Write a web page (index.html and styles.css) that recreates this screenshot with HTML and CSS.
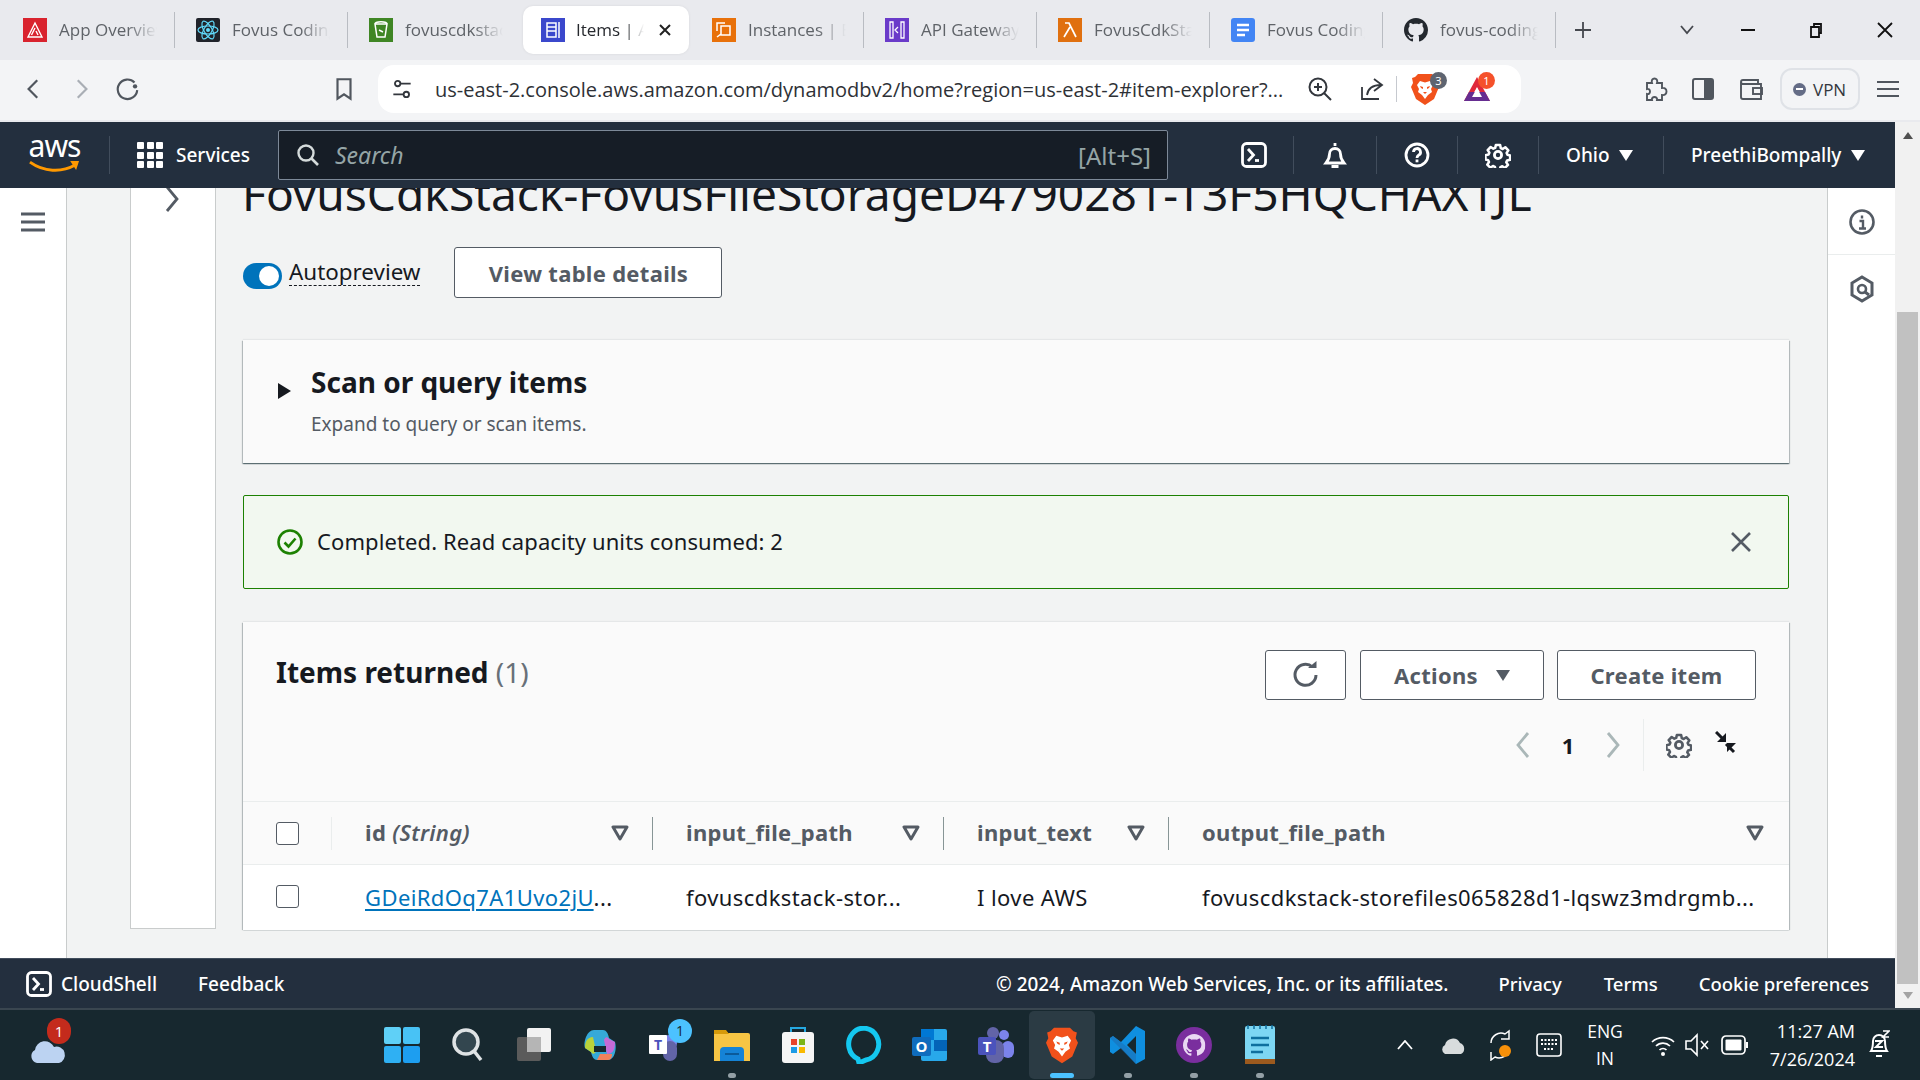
FILE: index.html
```html
<!DOCTYPE html>
<html lang="en">
<head>
    <meta charset="UTF-8">
    <title>Items | Amazon DynamoDB</title>
    <link rel="stylesheet" href="styles.css">
</head>
<body>

<svg class="sprites" width="0" height="0">
    <symbol id="i-terminal" viewBox="0 0 26 26"><rect x="1.500" y="1.500" width="23" height="23" rx="4" fill="none" stroke="currentColor" stroke-width="2.800"/><path d="M7 7l5.500 6L7 19" fill="none" stroke="currentColor" stroke-width="2.800"/><path d="M14 18.500h4" stroke="currentColor" stroke-width="2.800"/></symbol>
    <symbol id="i-gear" viewBox="0 0 26 26"><path d="M10.600 2h4.800l.7 3.400 2.100.9 2.900-1.900 3.400 3.400-1.900 2.900.9 2.100 3 .7v4.800l-3.400.7-.9 2.100 1.900 2.900-3.400 3.400-2.900-1.900-2.100.9-.7 3.100h-4.800l-.7-3.400-2.100-.9-2.900 1.900-3.400-3.400 1.900-2.900-.9-2.100-3-.7v-4.800l3.400-.7.9-2.100-1.900-2.900 3.400-3.400 2.900 1.900 2.100-.9z" transform="translate(1.300 1.300) scale(.9)" fill="none" stroke="currentColor" stroke-width="2.800" stroke-linejoin="round"/><circle cx="13" cy="13" r="3.600" fill="none" stroke="currentColor" stroke-width="2.800"/></symbol>
    <symbol id="i-chev-left" viewBox="0 0 16 28"><path d="M13 2L3 14l10 12" fill="none" stroke="currentColor" stroke-width="2.800"/></symbol>
    <symbol id="i-chev-right" viewBox="0 0 16 28"><path d="M3 2l10 12L3 26" fill="none" stroke="currentColor" stroke-width="2.800"/></symbol>
    <symbol id="i-filter" viewBox="0 0 18 16"><path d="M2 2h14L9 14z" fill="none" stroke="currentColor" stroke-width="3" stroke-linejoin="round"/></symbol>
    <symbol id="i-github" viewBox="0 0 16 16"><path fill="currentColor" d="M8 0C3.580 0 0 3.580 0 8c0 3.540 2.290 6.530 5.470 7.590.4.070.55-.17.55-.38 0-.19-.01-.82-.01-1.490-2.010.37-2.530-.49-2.690-.94-.09-.23-.48-.94-.82-1.130-.28-.15-.68-.52-.01-.53.63-.01 1.080.58 1.230.82.72 1.210 1.870.87 2.330.66.070-.52.28-.87.51-1.070-1.780-.2-3.640-.89-3.640-3.950 0-.87.31-1.590.82-2.150-.08-.2-.36-1.020.08-2.120 0 0 .67-.21 2.200.82.64-.18 1.320-.27 2-.27.68 0 1.360.09 2 .27 1.530-1.040 2.200-.82 2.200-.82.44 1.100.16 1.920.08 2.120.51.56.82 1.270.82 2.150 0 3.070-1.870 3.750-3.650 3.950.29.25.54.73.54 1.480 0 1.070-.01 1.930-.01 2.200 0 .21.15.46.55.38A8.013 8.013 0 0016 8c0-4.420-3.580-8-8-8z"/></symbol>
    <symbol id="i-brave" viewBox="0 0 28 32"><path fill="#f1511b" d="M7 1h14l3 3 3 1-1 5 2 4-5 12-9 6-9-6L0 14l2-4-1-5 3-1z"/><path fill="#fff" d="M9 8l5 1.500L19 8l3 4-2 4 1 3-4 3-3 4-3-4-4-3 1-3-2-4z"/><path fill="#f1511b" d="M9 13l3 1v2l-2-1zM19 13l-3 1v2l2-1zM12 19h4l-2 2z"/></symbol>
</svg>

<!-- Browser tabs -->
<div class="tabstrip">
    <div class="tab">
        <svg class="favicon" viewBox="0 0 24 24"><rect width="24" height="24" fill="#d9232e"/><path d="M12 5l7 14H5zM12 10l-3.500 7M13 13l2 4" fill="none" stroke="#fff" stroke-width="1.400"/></svg>
        <span class="tab-title">App Overview</span>
    </div>
    <div class="tab">
        <svg class="favicon" viewBox="0 0 24 24"><rect width="24" height="24" rx="2" fill="#20232a"/><g fill="none" stroke="#61dafb" stroke-width="1.200"><ellipse cx="12" cy="12" rx="10" ry="4"/><ellipse cx="12" cy="12" rx="10" ry="4" transform="rotate(60 12 12)"/><ellipse cx="12" cy="12" rx="10" ry="4" transform="rotate(120 12 12)"/></g><circle cx="12" cy="12" r="2" fill="#61dafb"/></svg>
        <span class="tab-title">Fovus Coding</span>
    </div>
    <div class="tab no-sep">
        <svg class="favicon" viewBox="0 0 24 24"><rect width="24" height="24" fill="#3f8624"/><path d="M6 6h12l-2 13H8zM6 6c0-3 12-3 12 0M10 12l4 2" fill="none" stroke="#fff" stroke-width="1.500"/></svg>
        <span class="tab-title">fovuscdkstack</span>
    </div>
    <div class="tab active">
        <svg class="favicon" viewBox="0 0 24 24"><rect width="24" height="24" fill="#3b48cc"/><path d="M6 5h9v14H6zM6 9h9M6 13h9M18 4v16" fill="none" stroke="#fff" stroke-width="1.500"/></svg>
        <span class="tab-title">Items | Am</span>
        <svg class="tab-close" viewBox="0 0 12 12"><path d="M1 1l10 10M11 1L1 11" stroke="#222" stroke-width="2"/></svg>
    </div>
    <div class="tab">
        <svg class="favicon" viewBox="0 0 24 24"><rect width="24" height="24" fill="#e8710a"/><path d="M9 8h9v9H9zM5 13V5h8M5 19l4-3" fill="none" stroke="#fff" stroke-width="1.500"/></svg>
        <span class="tab-title">Instances | EC2</span>
    </div>
    <div class="tab">
        <svg class="favicon" viewBox="0 0 24 24"><rect width="24" height="24" fill="#6a3bc9"/><path d="M5 4h3v16H5zM16 4h3v16h-3zM13 9l-3 3 3 3" fill="none" stroke="#fff" stroke-width="1.300"/></svg>
        <span class="tab-title">API Gateway</span>
    </div>
    <div class="tab">
        <svg class="favicon" viewBox="0 0 24 24"><rect width="24" height="24" fill="#e0700f"/><path d="M7 5h4l7 14M12 9l-6 10" fill="none" stroke="#fff" stroke-width="1.700"/></svg>
        <span class="tab-title">FovusCdkStack</span>
    </div>
    <div class="tab">
        <svg class="favicon" viewBox="0 0 24 24"><rect width="24" height="24" rx="3" fill="#4285f4"/><path d="M6 7h12M6 12h12M6 17h8" stroke="#fff" stroke-width="2.400"/></svg>
        <span class="tab-title">Fovus Coding</span>
    </div>
    <div class="tab">
        <svg class="favicon favicon-dark"><use href="#i-github"/></svg>
        <span class="tab-title">fovus-coding</span>
    </div>
    <svg class="strip-plus" viewBox="0 0 18 18"><path d="M9 1v16M1 9h16" stroke="#45484e" stroke-width="1.800"/></svg>
    <div class="window-controls">
        <svg class="win-btn btn-list" viewBox="0 0 16 10"><path d="M2 1l6 7 6-7" fill="none" stroke="#45484e" stroke-width="1.800"/></svg>
        <svg class="win-btn btn-min" viewBox="0 0 14 2"><path d="M0 1h14" stroke="#111" stroke-width="2"/></svg>
        <svg class="win-btn btn-max" viewBox="0 0 16 16"><path d="M3 5h8v10H3zM6 5V2h7v9h-2" fill="none" stroke="#111" stroke-width="1.800"/></svg>
        <svg class="win-btn btn-close" viewBox="0 0 16 16"><path d="M1 1l14 14M15 1L1 15" stroke="#111" stroke-width="1.800"/></svg>
    </div>
</div>

<!-- Browser toolbar -->
<div class="toolbar">
    <div class="nav-buttons">
        <svg class="tool-icon" viewBox="0 0 24 24"><path d="M15 4l-8 8 8 8" fill="none" stroke="#50565e" stroke-width="2"/></svg>
        <svg class="tool-icon" viewBox="0 0 24 24"><path d="M9 4l8 8-8 8" fill="none" stroke="#a9aeb5" stroke-width="2"/></svg>
        <svg class="tool-icon" viewBox="0 0 24 24"><path d="M18 6a9 9 0 1 0 2.500 7" fill="none" stroke="#50565e" stroke-width="2"/><circle cx="18.500" cy="9.500" r="2" fill="#50565e"/></svg>
    </div>
    <svg class="tool-icon bookmark" viewBox="0 0 24 24"><path d="M6 3h12v18l-6-4-6 4z" fill="none" stroke="#50565e" stroke-width="2"/></svg>
    <div class="urlbar">
        <svg class="tool-icon tune" viewBox="0 0 24 24"><circle cx="8" cy="7" r="2.500" fill="none" stroke="#33373d" stroke-width="1.700"/><circle cx="16" cy="17" r="2.500" fill="none" stroke="#33373d" stroke-width="1.700"/><path d="M11 7h9M4 17h9" stroke="#33373d" stroke-width="1.700"/></svg>
        <span class="url-text">us-east-2.console.aws.amazon.com/dynamodbv2/home?region=us-east-2#item-explorer?...</span>
        <svg class="tool-icon url-zoom" viewBox="0 0 26 26"><circle cx="11" cy="11" r="8.500" fill="none" stroke="#33373d" stroke-width="2"/><path d="M17 17l7 7M7 11h8M11 7v8" stroke="#33373d" stroke-width="2"/></svg>
        <svg class="tool-icon url-share" viewBox="0 0 26 26"><path d="M15 3l8 6-8 6M22 9c-8 0-13 3-14 10M3 11v12h17" fill="none" stroke="#33373d" stroke-width="1.800"/></svg>
        <span class="url-sep"></span>
        <span class="ext-wrap ext-brave">
            <svg class="ext-icon"><use href="#i-brave"/></svg>
            <span class="ext-count gray">3</span>
        </span>
        <span class="ext-wrap ext-bat">
            <svg class="ext-icon" viewBox="0 0 28 28"><path d="M14 2l13 24H1z" fill="#e0293b"/><path d="M14 12l6 11H8z" fill="#fff"/><path d="M1 26l5-9h16l5 9z" fill="#662d91"/><path d="M14 13l5 9H9z" fill="#fff"/></svg>
            <span class="ext-count orange">1</span>
        </span>
    </div>
    <svg class="tool-icon t-puzzle" viewBox="0 0 26 26"><path d="M5 7h5c-2-6 7-6 5 0h5v5c6-1 6 8 0 7v5h-5c1-4-6-4-5 0H5v-6c4 1 4-6 0-5z" fill="none" stroke="#50565e" stroke-width="1.900"/></svg>
    <svg class="tool-icon" viewBox="0 0 26 26"><rect x="3" y="3" width="20" height="20" rx="2" fill="none" stroke="#50565e" stroke-width="2"/><rect x="14" y="3" width="9" height="20" fill="#50565e"/></svg>
    <svg class="tool-icon" viewBox="0 0 26 26"><path d="M3 6a2 2 0 0 1 2-2h15v4M3 6v15a2 2 0 0 0 2 2h18V8H5a2 2 0 0 1-2-2z" fill="none" stroke="#50565e" stroke-width="1.900"/><rect x="15" y="12" width="9" height="6" fill="none" stroke="#50565e" stroke-width="1.900"/></svg>
    <div class="vpn-pill"><span class="vpn-dot"></span>VPN</div>
    <svg class="tool-icon t-menu" viewBox="0 0 26 26"><path d="M2 6h22M2 13h22M2 20h22" stroke="#50565e" stroke-width="2"/></svg>
</div>

<div class="viewport">
    <div class="console">

        <!-- AWS top navigation -->
        <header class="topnav">
            <div class="aws-logo">
                <span class="aws-word">aws</span>
                <svg class="aws-smile" viewBox="0 0 54 16"><path d="M2 3c14 10 32 11 46 3" fill="none" stroke="#f90" stroke-width="3"/><path d="M43 2l9 0-3 9z" fill="#f90"/></svg>
            </div>
            <span class="nav-sep sep-logo"></span>
            <div class="services">
                <div class="grid-icon"><i></i><i></i><i></i><i></i><i></i><i></i><i></i><i></i><i></i></div>
                <span>Services</span>
            </div>
            <div class="searchbox">
                <svg class="search-icon" viewBox="0 0 24 24"><circle cx="10" cy="10" r="7.500" fill="none" stroke="#d5dbdb" stroke-width="2.400"/><path d="M15.500 15.500L22 22" stroke="#d5dbdb" stroke-width="2.600"/></svg>
                <span class="search-text">Search</span>
                <span class="search-hint">[Alt+S]</span>
            </div>
            <div class="nav-cell cell-first"><svg class="nav-icon"><use href="#i-terminal"/></svg></div>
            <span class="nav-sep"></span>
            <div class="nav-cell cell-bell">
                <svg class="nav-icon" viewBox="0 0 26 26"><path d="M13 1v3M4 21c2.500-3 3.500-5 3.500-9a5.500 5.500 0 0 1 11 0c0 4 1 6 3.500 9zM9.500 24.500h7" fill="none" stroke="currentColor" stroke-width="2.800"/></svg>
            </div>
            <span class="nav-sep"></span>
            <div class="nav-cell">
                <svg class="nav-icon" viewBox="0 0 26 26"><circle cx="13" cy="13" r="11" fill="none" stroke="currentColor" stroke-width="2.800"/><path d="M9.500 10a3.500 3.500 0 1 1 5 3.200c-1 .6-1.500 1.300-1.500 2.800" fill="none" stroke="currentColor" stroke-width="2.800"/><rect x="11.600" y="17.500" width="2.800" height="2.800" fill="currentColor"/></svg>
            </div>
            <span class="nav-sep"></span>
            <div class="nav-cell"><svg class="nav-icon"><use href="#i-gear"/></svg></div>
            <span class="nav-sep"></span>
            <div class="nav-menu menu-region">Ohio<span class="caret"></span></div>
            <span class="nav-sep"></span>
            <div class="nav-menu menu-user">PreethiBompally<span class="caret"></span></div>
        </header>

        <div class="main">
            <aside class="rail nav-rail">
                <svg class="rail-burger" viewBox="0 0 24 20"><path d="M0 2h24M0 10h24M0 18h24" stroke="#545b64" stroke-width="3"/></svg>
            </aside>
            <div class="gutter"></div>
            <aside class="rail split-rail">
                <svg class="split-chevron"><use href="#i-chev-right"/></svg>
            </aside>

            <main class="content">
                <h1 class="table-title">FovusCdkStack-FovusFileStorageD4790281-T3F5HQCHAX1JL</h1>

                <div class="title-actions">
                    <span class="toggle"><span class="toggle-knob"></span></span>
                    <span class="toggle-label">Autopreview</span>
                    <button class="btn btn-details">View table details</button>
                </div>

                <section class="card scan-card">
                    <span class="expand-caret"></span>
                    <div>
                        <h2 class="card-title">Scan or query items</h2>
                        <p class="card-desc">Expand to query or scan items.</p>
                    </div>
                </section>

                <div class="alert">
                    <svg class="alert-icon" viewBox="0 0 26 26"><circle cx="13" cy="13" r="11.500" fill="none" stroke="#1d8102" stroke-width="2.600"/><path d="M7.500 13.500l4 4 7-8" fill="none" stroke="#1d8102" stroke-width="2.600"/></svg>
                    <span class="alert-text">Completed. Read capacity units consumed: 2</span>
                    <svg class="alert-close" viewBox="0 0 22 22"><path d="M2 2l18 18M20 2L2 20" stroke="#545b64" stroke-width="2.600"/></svg>
                </div>

                <section class="card items-card">
                    <div class="items-head">
                        <h2 class="card-title items-title">Items returned <span class="count">(1)</span></h2>
                        <div class="items-actions">
                            <button class="btn btn-refresh">
                                <svg viewBox="0 0 28 28" width="28" height="28"><path d="M24 14a10.500 10.500 0 1 1-3.500-8" fill="none" stroke="#545b64" stroke-width="3"/><path d="M16 7h8.500V0z" fill="#545b64"/></svg>
                            </button>
                            <button class="btn btn-actions">Actions<span class="caret caret-dark"></span></button>
                            <button class="btn btn-create">Create item</button>
                        </div>
                    </div>

                    <div class="pager">
                        <svg class="pager-chev"><use href="#i-chev-left"/></svg>
                        <span class="pager-num">1</span>
                        <svg class="pager-chev"><use href="#i-chev-right"/></svg>
                        <span class="pager-sep"></span>
                        <svg class="pager-gear"><use href="#i-gear"/></svg>
                        <svg class="pager-wrap" viewBox="0 0 24 24"><path d="M1 1l8 8M19 21l-8-8" stroke="#16191f" stroke-width="3"/><path d="M2 11h9V2zM12 12h9l-9 9z" fill="#16191f"/></svg>
                    </div>

                    <table class="items-table">
                        <thead>
                            <tr>
                                <th class="col-check"><div class="th-check"><span class="checkbox"></span></div></th>
                                <th class="col-id"><div class="th-inner"><span><b>id</b> <em>(String)</em></span><svg class="filter"><use href="#i-filter"/></svg></div></th>
                                <th class="col-file"><div class="th-inner"><span>input_file_path</span><svg class="filter"><use href="#i-filter"/></svg></div></th>
                                <th class="col-text"><div class="th-inner"><span>input_text</span><svg class="filter"><use href="#i-filter"/></svg></div></th>
                                <th class="col-out"><div class="th-inner"><span>output_file_path</span><svg class="filter"><use href="#i-filter"/></svg></div></th>
                            </tr>
                        </thead>
                        <tbody>
                            <tr>
                                <td class="col-check"><span class="checkbox"></span></td>
                                <td class="col-id"><a class="item-link" href="#">GDeiRdOq7A1Uvo2jU</a>...</td>
                                <td class="col-file">fovuscdkstack-stor...</td>
                                <td class="col-text">I love AWS</td>
                                <td class="col-out">fovuscdkstack-storefiles065828d1-lqswz3mdrgmb...</td>
                            </tr>
                        </tbody>
                    </table>
                </section>
            </main>

            <aside class="rail tools-rail">
                <div class="tool-slot">
                    <svg viewBox="0 0 26 26" width="26" height="26"><circle cx="13" cy="13" r="11.500" fill="none" stroke="#545b64" stroke-width="2.600"/><path d="M13 6.500v3M10.500 12H14v7M10 19.500h7" fill="none" stroke="#545b64" stroke-width="2.400"/></svg>
                </div>
                <div class="tool-slot">
                    <svg viewBox="0 0 26 28" width="26" height="28"><path d="M13 2l10 6v12l-10 6-10-6V8z" fill="none" stroke="#545b64" stroke-width="3"/><circle cx="13" cy="14" r="4" fill="none" stroke="#545b64" stroke-width="2.600"/><path d="M16 17l4 3" stroke="#545b64" stroke-width="3"/></svg>
                </div>
            </aside>
        </div>

        <footer class="console-footer">
            <svg class="foot-icon"><use href="#i-terminal"/></svg>
            <span class="foot-shell">CloudShell</span>
            <span class="foot-feedback">Feedback</span>
            <span class="foot-copy">&copy; 2024, Amazon Web Services, Inc. or its affiliates.</span>
            <span class="foot-privacy">Privacy</span>
            <span class="foot-terms">Terms</span>
            <span class="foot-cookie">Cookie preferences</span>
        </footer>
    </div>

    <div class="scrollbar">
        <span class="arrow arrow-up"></span>
        <div class="scroll-track"><div class="scroll-thumb"></div></div>
        <span class="arrow arrow-down"></span>
    </div>
</div>

<!-- Windows taskbar -->
<div class="taskbar">
    <div class="task-weather">
        <svg viewBox="0 0 38 34" width="38" height="34"><path d="M8 32a7 7 0 0 1-2-13 10 10 0 0 1 19-3 8 8 0 0 1 5 16z" fill="#bcd3f2"/></svg>
        <span class="weather-badge">1</span>
    </div>
    <div class="task-apps">
        <div class="task-app">
            <svg viewBox="0 0 36 36" width="36" height="36"><rect width="17" height="17" rx="2" fill="#5fd0f7"/><rect x="19" width="17" height="17" rx="2" fill="#48c2f5"/><rect y="19" width="17" height="17" rx="2" fill="#2fb0f3"/><rect x="19" y="19" width="17" height="17" rx="2" fill="#1d9ef0"/></svg>
        </div>
        <div class="task-app">
            <svg viewBox="0 0 34 36" width="34" height="36"><circle cx="15" cy="15" r="12" fill="#33464f" stroke="#dfe3e5" stroke-width="3.500"/><path d="M23 24l7 9" stroke="#dfe3e5" stroke-width="3.500"/></svg>
        </div>
        <div class="task-app">
            <svg viewBox="0 0 36 36" width="36" height="36"><rect x="1" y="10" width="24" height="24" rx="2" fill="#5b5b5b"/><rect x="11" y="1" width="24" height="24" rx="2" fill="#f2f2f2"/><rect x="11" y="10" width="14" height="15" fill="#b5b5b5"/></svg>
        </div>
        <div class="task-app">
            <svg viewBox="0 0 36 36" width="36" height="36"><path d="M12 3h9c3 0 5 3 6 8l6 4c2 6 0 18-7 18H15c-3 0-5-3-6-8l-6-4C1 15 5 3 12 3z" fill="#36a9d8"/><path d="M3 21c0-6 2-11 8-11l3 14c-1 3-3 4-5 1z" fill="#b9d23a"/><path d="M33 15c0 8-2 12-8 12l-3-14c1-3 3-4 5-1z" fill="#c66ad6"/><path d="M15 33l11 0c3 0 4-3 4-6H18z" fill="#f2815c"/><path d="M12 19h12v6H12z" fill="#17282f"/></svg>
        </div>
        <div class="task-app">
            <svg viewBox="0 0 38 36" width="38" height="36"><circle cx="22" cy="16" r="8" fill="#7b83eb"/><rect x="16" y="14" width="14" height="20" rx="7" fill="#6264a7"/><rect x="2" y="8" width="18" height="19" rx="1" fill="#fff"/><text class="svg-t" x="11" y="23" text-anchor="middle">T</text></svg>
            <span class="app-badge">1</span>
        </div>
        <div class="task-app running">
            <svg viewBox="0 0 36 36" width="36" height="36"><path d="M0 5a2 2 0 0 1 2-2h9l3 3h20a2 2 0 0 1 2 2v26H0z" fill="#f7c544"/><path d="M0 3h12l3 4H0z" fill="#d69a0a"/><path d="M6 24a4 4 0 0 1 4-4h16a4 4 0 0 1 4 4v10H6z" fill="#1583d6"/><rect x="11" y="26" width="14" height="2" fill="#0b5a99"/></svg>
        </div>
        <div class="task-app">
            <svg viewBox="0 0 34 38" width="34" height="38"><path d="M10 7V2h14v5" fill="none" stroke="#25a8e0" stroke-width="2"/><rect x="1" y="6" width="32" height="31" rx="3" fill="#f5f5f5"/><rect x="10" y="13" width="6" height="6" fill="#e8442a"/><rect x="18" y="13" width="6" height="6" fill="#7cb518"/><rect x="10" y="21" width="6" height="6" fill="#1c9be6"/><rect x="18" y="21" width="6" height="6" fill="#f9b900"/></svg>
        </div>
        <div class="task-app">
            <svg viewBox="0 0 36 38" width="36" height="38"><path d="M12 33a15 16 0 1 1 8 1l-7 3z" fill="none" stroke="#14c8f0" stroke-width="5"/></svg>
        </div>
        <div class="task-app">
            <svg viewBox="0 0 38 36" width="38" height="36"><rect x="10" y="2" width="26" height="32" rx="2" fill="#28a8ea"/><rect x="10" y="2" width="13" height="11" fill="#0078d4"/><rect x="23" y="13" width="13" height="11" fill="#0364b8"/><rect x="1" y="10" width="19" height="19" rx="2" fill="#0f6cbd"/><text class="svg-o" x="10.500" y="25" text-anchor="middle">O</text></svg>
        </div>
        <div class="task-app">
            <svg viewBox="0 0 38 38" width="38" height="38"><circle cx="27" cy="9" r="5" fill="#7b83eb"/><circle cx="16" cy="7" r="6" fill="#6264a7"/><rect x="25" y="15" width="12" height="17" rx="6" fill="#7b83eb"/><rect x="9" y="14" width="18" height="23" rx="8" fill="#6264a7"/><rect x="1" y="11" width="18" height="18" rx="2" fill="#4b53bc"/><text class="svg-t2" x="10" y="26" text-anchor="middle">T</text></svg>
        </div>
        <div class="task-app active">
            <svg width="32" height="40"><use href="#i-brave"/></svg>
        </div>
        <div class="task-app running">
            <svg viewBox="0 0 36 40" width="36" height="40"><path d="M26 1l9 5v28l-9 5-15-16L3 29l-3-2V13l3-2 8 6zM26 11l-9 9 9 9z" fill="#0f8fe0"/><path d="M3 11l23 18v10L0 13z" fill="#1a6fb5" opacity=".6"/></svg>
        </div>
        <div class="task-app running">
            <svg viewBox="0 0 36 36" width="36" height="36"><circle cx="18" cy="18" r="18" fill="#7a2e9e"/><g transform="translate(7 7) scale(1.400)" color="#e9d8f2"><use href="#i-github" width="16" height="16"/></g></svg>
        </div>
        <div class="task-app running">
            <svg viewBox="0 0 30 40" width="30" height="40"><rect y="1" width="30" height="38" rx="2" fill="#7dd6f3"/><rect y="34" width="30" height="5" fill="#9c5a1e"/><path d="M6 13h18M6 20h18M6 27h12" stroke="#0f6f9e" stroke-width="2.500"/><path d="M3 0v4M9 0v4M15 0v4M21 0v4M27 0v4" stroke="#0f6f9e" stroke-width="1.500"/></svg>
        </div>
    </div>
    <div class="tray">
        <svg class="tray-chevron" viewBox="0 0 16 10"><path d="M1 9l7-8 7 8" fill="none" stroke="#fff" stroke-width="1.800"/></svg>
        <svg class="tray-cloud" viewBox="0 0 26 20"><path d="M5 19a5 5 0 0 1 0-9 8 8 0 0 1 15-2 6 6 0 0 1 1 11z" fill="#d8dcdd"/></svg>
        <svg class="tray-sync" viewBox="0 0 26 32"><path d="M3 14a10 10 0 0 1 14-9l4-3v8h-8M21 19a10 10 0 0 1-14 9l-4 3v-8" fill="none" stroke="#fff" stroke-width="1.500"/><circle cx="17" cy="22" r="6" fill="#f79009"/></svg>
        <svg class="tray-keys" viewBox="0 0 26 24"><rect x="1" y="1" width="24" height="22" rx="3" fill="none" stroke="#fff" stroke-width="1.600"/><path d="M5 7h16M5 11h16M8 16h10" stroke="#fff" stroke-width="2" stroke-dasharray="2 1.500"/></svg>
        <div class="tray-lang">ENG<br>IN</div>
        <svg class="tray-wifi" viewBox="0 0 26 24"><path d="M2 9a16 16 0 0 1 22 0M6 13a10 10 0 0 1 14 0M9.500 17a5 5 0 0 1 7 0" fill="none" stroke="#fff" stroke-width="1.700"/><circle cx="13" cy="21" r="2" fill="#fff"/></svg>
        <svg class="tray-vol" viewBox="0 0 26 24"><path d="M2 8h5l6-6v20l-6-6H2z" fill="none" stroke="#fff" stroke-width="1.600"/><path d="M17 8l7 8M24 8l-7 8" stroke="#fff" stroke-width="1.600"/></svg>
        <svg class="tray-batt" viewBox="0 0 28 24"><rect x="1" y="3" width="23" height="18" rx="4" fill="none" stroke="#fff" stroke-width="1.700"/><rect x="4.500" y="6.500" width="16" height="11" rx="1" fill="#fff"/><path d="M26 9v6" stroke="#fff" stroke-width="2"/></svg>
        <div class="tray-clock">11:27 AM<br>7/26/2024</div>
        <svg class="tray-bell" viewBox="0 0 22 32"><path d="M3 22c2-3 2-6 2-10a6 6 0 0 1 12 0c0 4 0 7 2 10zM8 27h6" fill="none" stroke="#fff" stroke-width="2"/><path d="M7 12h7l-6 6h7" fill="none" stroke="#fff" stroke-width="2"/><path d="M15 2h6l-6 6h6" fill="none" stroke="#fff" stroke-width="1.600"/></svg>
    </div>
</div>

</body>
</html>
```

FILE: styles.css
```css
* {
    box-sizing: border-box;
}

html, body {
    margin: 0;
    height: 1080px;
    overflow: hidden;
}

body {
    font-family: "Noto Sans", "Open Sans", sans-serif;
    color: #16191f;
    background-color: #f2f3f3;
    display: flex;
    flex-direction: column;
}

.sprites {
    position: absolute;
}

/* Browser tabs */
.tabstrip {
    height: 60px;
    flex: none;
    display: flex;
    align-items: center;
    padding-left: 2px;
    background-color: #e9eaee;
    font-family: "Open Sans", sans-serif;
}

.tab {
    width: 173px;
    height: 36px;
    flex: none;
    display: flex;
    align-items: center;
    padding-left: 21px;
    border-right: 1px solid #b9bcc2;
    font-size: 17px;
    color: #5f6368;
}

.tab.no-sep {
    border-right: none;
    width: 175px;
}

.tab.active {
    height: 48px;
    width: 166px;
    margin-right: 2px;
    padding-left: 18px;
    border-right: none;
    border-radius: 10px;
    background-color: #fff;
    color: #26292e;
    box-shadow: 0 0 3px rgba(0, 0, 0, 0.08);
}

.favicon {
    width: 24px;
    height: 24px;
    flex: none;
}

.favicon-dark {
    color: #24292f;
}

.tab-title {
    width: 98px;
    margin-left: 12px;
    padding-bottom: 2px;
    white-space: nowrap;
    overflow: hidden;
    -webkit-mask-image: linear-gradient(to right, #000 70%, transparent 100%);
    mask-image: linear-gradient(to right, #000 70%, transparent 100%);
}

.tab.active .tab-title {
    width: 68px;
    margin-left: 11px;
}

.tab-close {
    width: 12px;
    height: 12px;
    flex: none;
    margin-left: 15px;
}

.strip-plus {
    width: 18px;
    height: 18px;
    margin-left: 18px;
}

.window-controls {
    display: flex;
    align-items: center;
    margin-left: 87px;
}

.win-btn {
    flex: none;
}

.btn-list {
    width: 16px;
    height: 10px;
}

.btn-min {
    width: 14px;
    height: 2px;
    margin-left: 46px;
}

.btn-max {
    width: 16px;
    height: 16px;
    margin-left: 53px;
}

.btn-close {
    width: 16px;
    height: 16px;
    margin-left: 53px;
}

/* Browser toolbar */
.toolbar {
    height: 62px;
    flex: none;
    display: flex;
    align-items: center;
    padding: 0 0 2px 10px;
    background-color: #f3f4f6;
    border-bottom: 2px solid #e9eaee;
}

.tool-icon {
    width: 26px;
    height: 26px;
    flex: none;
    margin: 0 11px;
}

.nav-buttons {
    display: flex;
    width: 142px;
}

.nav-buttons .tool-icon {
    margin: 0 10.500px;
}

.bookmark {
    margin-left: 179px;
    margin-right: 21px;
}

.urlbar {
    width: 1143px;
    height: 48px;
    flex: none;
    display: flex;
    align-items: center;
    padding-left: 11px;
    background-color: #fff;
    border-radius: 16px;
}

.tool-icon.tune {
    margin: 0;
}

.url-text {
    width: 858px;
    flex: none;
    margin-left: 20px;
    font-family: "Open Sans", sans-serif;
    font-size: 20px;
    white-space: nowrap;
    color: #2e3136;
}

.tool-icon.url-zoom {
    margin: 0 0 0 14px;
}

.tool-icon.url-share {
    margin: 0 0 0 26px;
}

.url-sep {
    width: 1px;
    height: 26px;
    margin-left: 11px;
    background-color: #c6c9cf;
}

.ext-wrap {
    position: relative;
    display: block;
    width: 28px;
    height: 32px;
    flex: none;
}

.ext-brave {
    margin-left: 14px;
}

.ext-bat {
    margin-left: 24px;
}

.ext-icon {
    width: 28px;
    height: 32px;
    display: block;
}

.ext-count {
    position: absolute;
    top: -1px;
    right: -8px;
    width: 17px;
    height: 17px;
    border-radius: 50%;
    color: #fff;
    font-size: 11px;
    line-height: 17px;
    text-align: center;
}

.ext-count.gray {
    background-color: #5e6470;
}

.ext-count.orange {
    right: -4px;
    background-color: #f5512b;
}

.tool-icon.t-puzzle {
    margin-left: 121px;
}

.vpn-pill {
    width: 80px;
    height: 42px;
    flex: none;
    margin-left: 5px;
    display: flex;
    align-items: center;
    gap: 7px;
    padding-left: 11px;
    border: 2px solid #dfe2e7;
    border-radius: 12px;
    font-family: "Open Sans", sans-serif;
    font-size: 17px;
    color: #33373d;
}

.vpn-dot {
    width: 13px;
    height: 13px;
    border-radius: 50%;
    background: linear-gradient(#fff, #fff) center / 7px 2px no-repeat, #646c86;
}

.tool-icon.t-menu {
    margin-left: 15px;
    margin-right: 0;
}

/* Console frame */
.viewport {
    flex: 1;
    display: flex;
    min-height: 0;
}

.console {
    width: 1895px;
    flex: none;
    display: flex;
    flex-direction: column;
}

.topnav {
    height: 66px;
    flex: none;
    display: flex;
    align-items: center;
    background-color: #232f3e;
    color: #fff;
    font-size: 19px;
}

.aws-logo {
    width: 53px;
    margin-left: 28px;
    display: flex;
    flex-direction: column;
    align-items: center;
    flex: none;
}

.aws-word {
    font-size: 30px;
    line-height: 22px;
    letter-spacing: -1px;
    font-weight: 400;
}

.aws-smile {
    width: 53px;
    height: 16px;
    margin-top: 2px;
}

.nav-sep {
    width: 1px;
    height: 38px;
    flex: none;
    background-color: #414d5c;
}

.sep-logo {
    margin-left: 28px;
}

.services {
    width: 141px;
    display: flex;
    align-items: center;
    flex: none;
    margin-left: 27px;
}

.services span {
    margin-left: 13px;
    font-weight: 500;
}

.grid-icon {
    width: 26px;
    display: grid;
    grid-template-columns: repeat(3, 7px);
    gap: 2.500px;
}

.grid-icon i {
    height: 7px;
    background-color: #fff;
    border-radius: 1px;
}

.searchbox {
    width: 890px;
    height: 50px;
    flex: none;
    display: flex;
    align-items: center;
    padding: 0 16px 0 17px;
    background-color: #161d26;
    border: 1px solid #7d8998;
    border-radius: 2px;
}

.search-icon {
    width: 24px;
    height: 24px;
}

.search-text {
    margin-left: 15px;
    font-size: 23px;
    font-style: italic;
    color: #95a5a6;
}

.search-hint {
    margin-left: auto;
    font-size: 24px;
    color: #95a5a6;
}

.nav-cell {
    width: 80px;
    flex: none;
    display: flex;
    justify-content: center;
    color: #fff;
}

.nav-cell.cell-first {
    width: 125px;
    padding-left: 46px;
}

.nav-cell.cell-bell {
    width: 82px;
}

.nav-icon {
    width: 26px;
    height: 26px;
}

.nav-menu {
    display: flex;
    align-items: center;
    flex: none;
    font-weight: 500;
    white-space: nowrap;
}

.menu-region {
    width: 124px;
    padding-left: 27px;
}

.menu-region .caret {
    margin-left: 9px;
}

.menu-user {
    padding-left: 27px;
}

.caret {
    width: 0;
    height: 0;
    margin-left: 10px;
    border-left: 7px solid transparent;
    border-right: 7px solid transparent;
    border-top: 11px solid #fff;
}

/* Main layout */
.main {
    flex: 1;
    display: flex;
    min-height: 0;
    overflow: hidden;
}

.rail {
    flex: none;
    background-color: #fff;
    box-shadow: 0 0 0 1px #c9cccc;
}

.nav-rail {
    width: 66px;
    padding: 24px 0 0 21px;
}

.rail-burger {
    width: 24px;
    height: 20px;
    display: block;
}

.gutter {
    width: 65px;
    flex: none;
}

.split-rail {
    width: 84px;
    height: 740px;
    padding: 0 0 0 33px;
    margin-bottom: 30px;
}

.split-chevron {
    width: 16px;
    height: 28px;
    display: block;
    color: #545b64;
    margin-top: -3px;
}

.content {
    flex: 1;
    min-width: 0;
    padding: 0 39px 0 28px;
}

.table-title {
    margin: -19px 0 0 -1px;
    font-size: 46.100px;
    line-height: 50px;
    font-weight: 400;
    white-space: nowrap;
}

.title-actions {
    display: flex;
    align-items: center;
    margin-top: 28px;
    height: 51px;
}

.toggle {
    width: 39px;
    height: 26px;
    margin-top: 6px;
    flex: none;
    display: flex;
    justify-content: flex-end;
    align-items: center;
    padding-right: 3px;
    border-radius: 13px;
    background-color: #0073bb;
}

.toggle-knob {
    width: 20px;
    height: 20px;
    border-radius: 50%;
    background-color: #fff;
}

.toggle-label {
    margin-left: 7px;
    font-size: 22.400px;
    line-height: 26px;
    border-bottom: 1px dashed #16191f;
}

.btn {
    height: 50px;
    padding: 0;
    background-color: #fff;
    border: 1.500px solid #545b64;
    border-radius: 3px;
    font-family: inherit;
    font-size: 22px;
    font-weight: 700;
    letter-spacing: 0.3px;
    color: #545b64;
}

.btn-details {
    width: 268px;
    height: 51px;
    margin-left: 34px;
}

.card {
    background-color: #fafafa;
    box-shadow: 0 1px 1px 0 rgba(0, 28, 36, 0.4), 1px 1px 1px 0 rgba(0, 28, 36, 0.2), -1px 1px 1px 0 rgba(0, 28, 36, 0.2), 0 -1px 1px 0 rgba(0, 28, 36, 0.05);
}

.scan-card {
    height: 123px;
    margin-top: 42px;
    display: flex;
    align-items: flex-start;
    padding: 23px 0 0 35px;
}

.expand-caret {
    width: 0;
    height: 0;
    margin-top: 20px;
    flex: none;
    border-top: 8px solid transparent;
    border-bottom: 8px solid transparent;
    border-left: 13px solid #16191f;
}

.card-title {
    margin: 0;
    font-size: 28px;
    line-height: 38px;
    font-weight: 700;
}

.scan-card .card-title {
    margin-left: 20px;
}

.card-desc {
    margin: 10px 0 0 20px;
    font-size: 19px;
    line-height: 26px;
    color: #545b64;
}

.alert {
    height: 94px;
    margin-top: 32px;
    display: flex;
    align-items: center;
    padding: 0 36px 0 33px;
    background-color: #f2f8f0;
    border: 1.500px solid #1d8102;
    border-radius: 2px;
}

.alert-icon {
    width: 26px;
    height: 26px;
    flex: none;
}

.alert-text {
    margin: 0 0 2px 14px;
    font-size: 22px;
    letter-spacing: 0.1px;
}

.alert-close {
    width: 22px;
    height: 22px;
    margin-left: auto;
}

/* Items table */
.items-card {
    height: 307px;
    margin-top: 33px;
}

.items-head {
    display: flex;
    justify-content: space-between;
    padding: 28px 33px 0;
}

.items-title {
    margin-top: 3px;
}

.count {
    font-weight: 400;
    color: #687078;
}

.items-actions {
    display: flex;
}

.btn-refresh {
    width: 81px;
    margin-right: 14px;
    display: flex;
    align-items: center;
    justify-content: center;
}

.btn-actions {
    width: 184px;
    margin-right: 13px;
    display: flex;
    align-items: center;
    justify-content: center;
}

.caret-dark {
    margin-left: 18px;
    border-top-color: #545b64;
}

.btn-create {
    width: 199px;
}

.pager {
    display: flex;
    align-items: center;
    height: 54px;
    margin-top: 18px;
    padding-left: 1272px;
    color: #545b64;
}

.pager-chev {
    width: 16px;
    height: 28px;
    color: #aab7b8;
}

.pager-num {
    width: 16px;
    margin: 0 29px 0 29px;
    font-size: 22px;
    font-weight: 700;
    color: #16191f;
    text-align: center;
}

.pager-sep {
    width: 1px;
    height: 52px;
    margin-left: 22px;
    background-color: #eaeded;
}

.pager-gear {
    width: 26px;
    height: 26px;
    margin-left: 22px;
}

.pager-wrap {
    width: 24px;
    height: 24px;
    margin: -4px 0 0 23px;
}

.items-table {
    width: 100%;
    margin-top: 29px;
    border-collapse: collapse;
    table-layout: fixed;
    font-size: 22px;
    letter-spacing: 0.4px;
}

.items-table th {
    height: 63px;
    padding: 0;
    text-align: left;
    font-weight: 700;
    letter-spacing: 0.3px;
    color: #545b64;
    border-top: 1px solid #eaeded;
    border-bottom: 1px solid #eaeded;
}

.items-table th b {
    font-weight: 700;
}

.items-table th em {
    font-weight: 600;
}

.items-table td {
    height: 65px;
    padding: 0 0 1px;
    background-color: #fff;
    white-space: nowrap;
    overflow: hidden;
}

.col-check {
    width: 122px;
    padding-left: 33px !important;
}

.col-id {
    width: 288px;
}

.col-file {
    width: 291px;
}

.col-text {
    width: 225px;
}

.th-check {
    width: 56px;
    height: 33px;
    display: flex;
    align-items: center;
    border-right: 1px solid #eaeded;
}

.th-inner {
    height: 33px;
    display: flex;
    align-items: center;
    justify-content: space-between;
    padding-right: 23px;
    border-right: 1px solid #879596;
}

.th-inner span {
    margin-bottom: 2px;
}

.col-out .th-inner {
    border-right: none;
    padding-right: 25px;
}

td.col-file, td.col-text, td.col-out, th.col-file, th.col-text, th.col-out {
    padding-left: 33px !important;
}

.filter {
    width: 18px;
    height: 16px;
    color: #545b64;
    flex: none;
}

.checkbox {
    display: block;
    width: 23px;
    height: 23px;
    border: 1.500px solid #545b64;
    border-radius: 3px;
    background-color: #fff;
}

.item-link {
    color: #0073bb;
    text-decoration: underline;
    text-underline-offset: 3px;
}

/* Tools rail on the right */
.tools-rail {
    width: 67px;
}

.tool-slot {
    height: 67px;
    padding-top: 1px;
    display: flex;
    align-items: center;
    justify-content: center;
    border-bottom: 1px solid #eaeded;
}

.tool-slot + .tool-slot {
    padding-top: 0;
    border-bottom: none;
}

.console-footer {
    height: 50px;
    flex: none;
    display: flex;
    align-items: center;
    padding-left: 26px;
    background-color: #232f3e;
    color: #fff;
    font-size: 19px;
    font-weight: 500;
    border-top: 1px solid #414d5c;
    white-space: nowrap;
}

.foot-icon {
    width: 26px;
    height: 26px;
    flex: none;
}

.foot-shell {
    margin-left: 9px;
}

.foot-feedback {
    margin-left: 41px;
}

.foot-copy {
    margin-left: auto;
    font-size: 18.900px;
}

.foot-privacy, .foot-terms, .foot-cookie {
    font-size: 18.500px;
}

.foot-privacy {
    margin-left: 50px;
}

.foot-terms {
    margin-left: 42px;
}

.foot-cookie {
    margin-left: 41px;
    margin-right: 26px;
}

/* Page scrollbar */
.scrollbar {
    width: 25px;
    flex: none;
    display: flex;
    flex-direction: column;
    align-items: center;
    background-color: #f1f1f1;
}

.arrow {
    width: 0;
    height: 0;
    flex: none;
    border-left: 5px solid transparent;
    border-right: 5px solid transparent;
}

.arrow-up {
    margin-top: 10px;
    border-bottom: 7px solid #505050;
}

.arrow-down {
    margin: 8px 0 9px;
    border-top: 7px solid #a3a3a3;
}

.scroll-track {
    flex: 1;
    width: 100%;
    display: flex;
    flex-direction: column;
    padding-left: 2px;
    padding-top: 173px;
}

.scroll-thumb {
    flex: 1;
    width: 21px;
    background-color: #c1c1c1;
}

/* Windows taskbar */
.taskbar {
    height: 72px;
    flex: none;
    display: flex;
    align-items: center;
    border-top: 2px solid #3a4650;
    background-color: #17282f;
    color: #fff;
    font-family: "Open Sans", sans-serif;
}

.task-weather {
    width: 369px;
    flex: none;
    position: relative;
    padding: 5px 0 0 29px;
}

.task-weather svg {
    display: block;
}

.weather-badge {
    position: absolute;
    left: 47px;
    top: -8px;
    width: 24px;
    height: 26px;
    border-radius: 12px;
    background-color: #c42b1c;
    font-size: 15px;
    line-height: 26px;
    text-align: center;
}

.task-apps {
    display: flex;
    flex: none;
}

.task-app {
    width: 66px;
    height: 68px;
    flex: none;
    position: relative;
    display: flex;
    align-items: center;
    justify-content: center;
}

.task-app.running::after {
    content: "";
    position: absolute;
    left: 29px;
    bottom: 1px;
    width: 8px;
    height: 5px;
    border-radius: 3px;
    background-color: #94a0a6;
}

.task-app.active {
    border-radius: 5px;
    background-color: #2b3b44;
}

.task-app.active::after {
    content: "";
    position: absolute;
    left: 21px;
    bottom: 1px;
    width: 24px;
    height: 5px;
    border-radius: 3px;
    background-color: #4cc2ff;
}

.app-badge {
    position: absolute;
    right: 7px;
    top: 8px;
    width: 24px;
    height: 24px;
    border-radius: 50%;
    background-color: #4cc2ff;
    color: #17282f;
    font-size: 14px;
    line-height: 24px;
    text-align: center;
}

.svg-t {
    font-size: 14px;
    font-weight: 700;
    fill: #4b53bc;
}

.svg-t2, .svg-o {
    font-size: 15px;
    font-weight: 700;
    fill: #fff;
}

.tray {
    flex: 1;
    display: flex;
    align-items: center;
    padding-left: 104px;
    font-size: 17px;
    line-height: 26px;
}

.tray svg {
    flex: none;
}

.tray-chevron {
    width: 16px;
    height: 10px;
}

.tray-cloud {
    width: 26px;
    height: 20px;
    margin-left: 27px;
}

.tray-sync {
    width: 26px;
    height: 32px;
    margin-left: 22px;
}

.tray-keys {
    width: 26px;
    height: 24px;
    margin-left: 22px;
}

.tray-lang {
    width: 60px;
    margin-left: 13px;
    text-align: center;
    font-size: 17.500px;
    line-height: 27px;
}

.tray-wifi {
    width: 26px;
    height: 24px;
    margin-left: 15px;
}

.tray-vol {
    width: 26px;
    height: 24px;
    margin-left: 8px;
}

.tray-batt {
    width: 28px;
    height: 24px;
    margin-left: 11px;
}

.tray-clock {
    width: 90px;
    margin-left: 16px;
    text-align: right;
    font-size: 18px;
    line-height: 28px;
    white-space: nowrap;
}

.tray-bell {
    width: 22px;
    height: 32px;
    margin-left: 13px;
}
```
